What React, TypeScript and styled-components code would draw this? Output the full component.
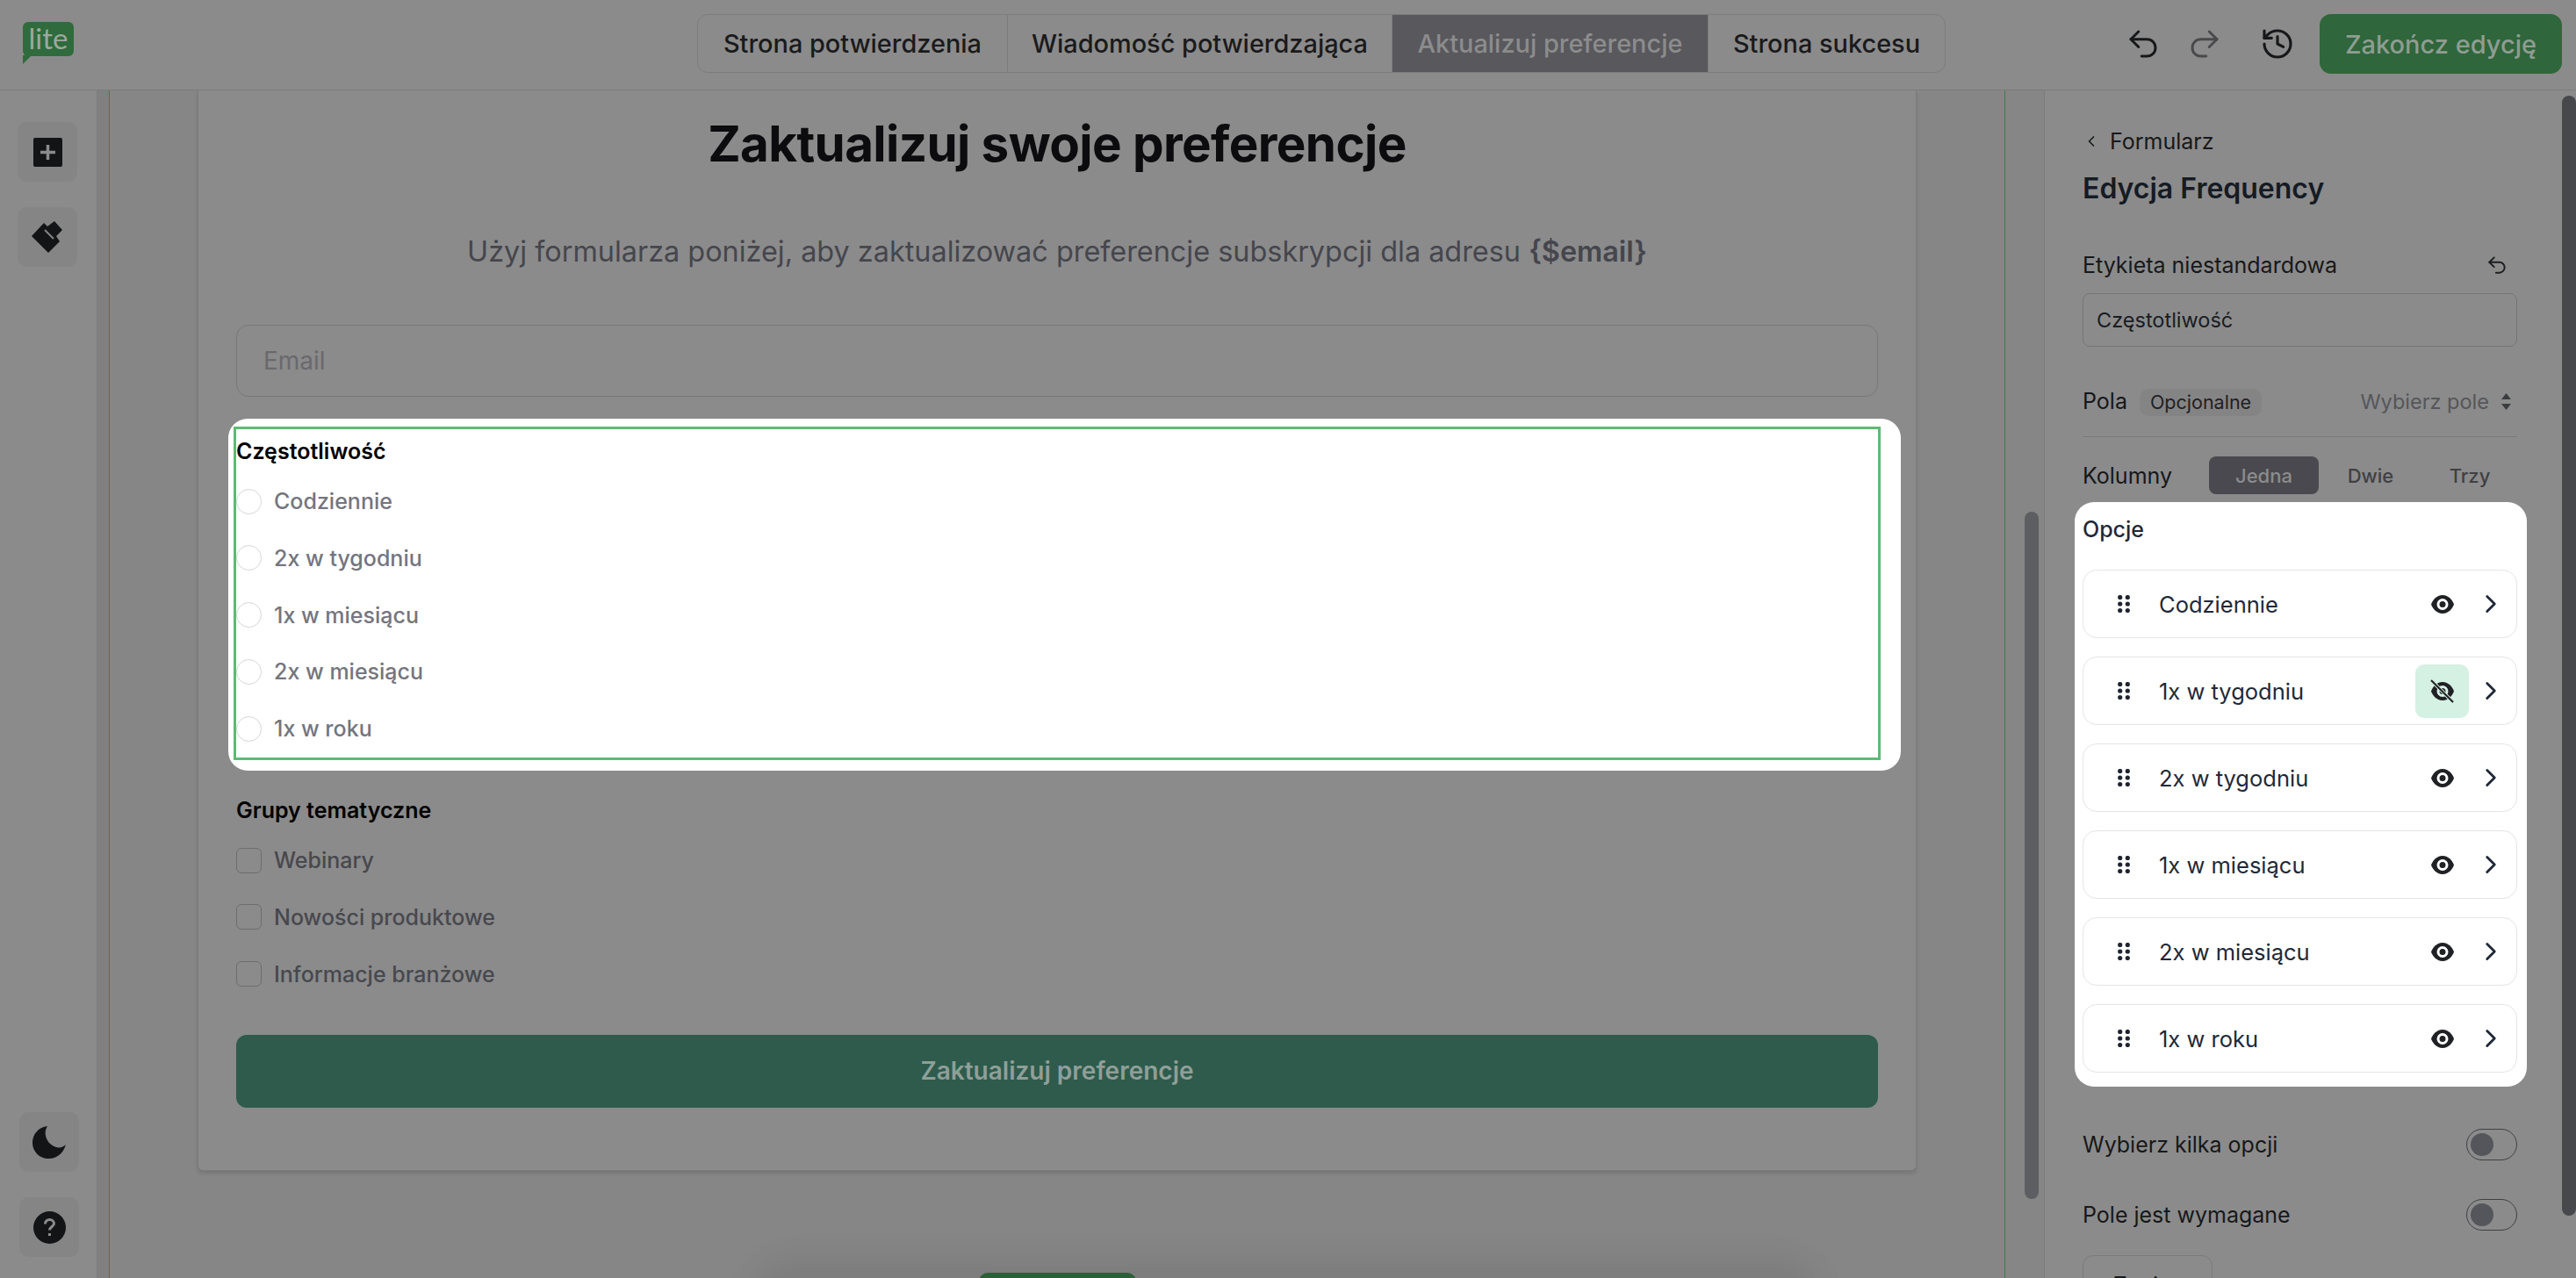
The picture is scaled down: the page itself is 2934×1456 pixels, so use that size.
import React from "react";
import styled, { createGlobalStyle } from "styled-components";
import { ChevronLeft, ChevronRight, History, Redo2, Undo2 } from "lucide-react";

const GlobalStyle = createGlobalStyle`
  * {
    box-sizing: border-box;
  }
  html,
  body {
    margin: 0;
    padding: 0;
    height: 100%;
    overflow: hidden;
    background: #8b8b8b;
    font-family: Inter, "Noto Sans", sans-serif;
  }
`;

const Page = styled.div`
  width: 2934px;
  height: 1456px;
  display: flex;
  flex-direction: column;
  overflow: hidden;
  background: #8b8b8b;
  color: #16171a;
`;

const Header = styled.header`
  height: 103px;
  flex: none;
  display: flex;
  align-items: flex-start;
  border-bottom: 1px solid #7b7b7b;
  padding: 16px 16px 0 26px;
`;

const Logo = styled.div`
  position: relative;
  width: 58px;
  height: 39px;
  margin-top: 9px;
  border-radius: 6px;
  background: #2f6b3c;
  color: #9ea8a0;
  font-family: Lato, sans-serif;
  font-size: 33px;
  line-height: 37px;
  text-align: center;

  &::after {
    content: "";
    position: absolute;
    left: 0;
    top: 38px;
    border-top: 10px solid #2f6b3c;
    border-right: 10px solid transparent;
  }
`;

const Tabs = styled.nav`
  display: flex;
  height: 67px;
  margin-left: 710px;
  border: 1px solid #7c7c7c;
  border-radius: 12px;
  overflow: hidden;
`;

const Tab = styled.div<{ $active?: boolean; $width: number }>`
  display: flex;
  align-items: center;
  justify-content: center;
  width: ${(p) => p.$width}px;
  font-size: 28.9px;
  font-weight: 500;
  background: ${(p) => (p.$active ? "#58585d" : "transparent")};
  color: ${(p) => (p.$active ? "#8c8c8c" : "#1a1a1c")};
  & + & {
    border-left: 1px solid #7c7c7c;
  }
`;

const HeaderActions = styled.div`
  display: flex;
  align-items: center;
  height: 68px;
  margin-left: auto;
`;

const ToolIcon = styled.span<{ $muted?: boolean; $gap: number }>`
  display: flex;
  align-items: center;
  justify-content: center;
  width: 42px;
  margin-right: ${(p) => p.$gap}px;
  color: ${(p) => (p.$muted ? "#4a4a4d" : "#17181a")};
`;

const FinishButton = styled.button`
  width: 276px;
  height: 68px;
  border: none;
  border-radius: 13px;
  background: #2f663b;
  color: #8e9d92;
  font-family: inherit;
  font-size: 29px;
  font-weight: 500;
`;

const Body = styled.div`
  flex: 1;
  min-height: 0;
  display: flex;
`;

const Rail = styled.aside`
  width: 111px;
  flex: none;
  display: flex;
  flex-direction: column;
  padding: 36px 0 24px 20px;
  border-right: 1px solid #7c7c7c;
`;

const RailButton = styled.div<{ $bottom?: boolean }>`
  width: 68px;
  height: 68px;
  display: flex;
  align-items: center;
  justify-content: center;
  border-radius: 11px;
  background: #858585;
  margin-left: ${(p) => (p.$bottom ? "2px" : "0")};
`;

const RailGroup = styled.div`
  display: flex;
  flex-direction: column;
  gap: 29px;
`;

const RailSpacer = styled.div`
  flex: 1;
`;

const LeftGutter = styled.div`
  width: 13px;
  flex: none;
  background: #808080;
`;

const Canvas = styled.main`
  position: relative;
  flex: 1;
  min-width: 0;
  padding: 0 100px;
  overflow: hidden;
  background: #868686;
  border-left: 1px solid #3f7a4e;
  border-right: 1px solid #3f7a4e;
`;

const Card = styled.section`
  padding: 25px 43px 71px;
  background: #8b8b8b;
  border: 1px solid #7a7a7a;
  border-top: none;
  border-radius: 0 0 6px 6px;
  box-shadow: 0 3px 4px rgba(0, 0, 0, 0.12);
`;

const Heading = styled.h1`
  margin: 0;
  font-size: 56.5px;
  font-weight: 700;
  line-height: 72px;
  text-align: center;
  color: #0c0c0e;
  letter-spacing: -0.6px;
`;

const Subtitle = styled.p`
  margin: 65px 0 0;
  font-size: 32.4px;
  line-height: 44px;
  text-align: center;
  color: #45464d;

  b {
    font-weight: 600;
  }
`;

const EmailField = styled.div`
  height: 82px;
  margin-top: 61px;
  padding-left: 30px;
  display: flex;
  align-items: center;
  border: 1px solid #787878;
  border-radius: 14px;
  color: #69696e;
  font-size: 28px;
`;

const Spotlight = styled.div`
  height: 401px;
  margin: 25px -26px 0 -9px;
  padding: 9px 23px 12px 6px;
  background: #ffffff;
  border-radius: 22px;
`;

const Selected = styled.div`
  height: 380px;
  padding: 8px 0 0 0;
  border: 3px solid #5dbb73;
`;

const GroupLabel = styled.div`
  font-size: 25px;
  font-weight: 600;
  line-height: 34px;
  color: #000000;
`;

const ChoiceList = styled.div`
  display: flex;
  flex-direction: column;
  gap: 24.8px;
  margin-top: 20px;
`;

const Choice = styled.div<{ $dim?: boolean }>`
  height: 40px;
  display: flex;
  align-items: center;
  gap: 14px;
  font-size: 25px;
  font-weight: 500;
  color: ${(p) => (p.$dim ? "#47484e" : "#74757e")};
`;

const Radio = styled.span`
  width: 29px;
  height: 29px;
  flex: none;
  border: 1px solid #d6d6d9;
  border-radius: 50%;
`;

const Checkbox = styled.span`
  width: 29px;
  height: 29px;
  flex: none;
  border: 1px solid #6d6d6d;
  border-radius: 6px;
`;

const Groups = styled.div`
  margin-top: 28px;
`;

const SubmitButton = styled.div`
  height: 83px;
  margin-top: 49px;
  display: flex;
  align-items: center;
  justify-content: center;
  border-radius: 12px;
  background: #2e5b4c;
  color: #8f9f98;
  font-size: 28px;
  font-weight: 600;
`;

const Dock = styled.div`
  position: absolute;
  left: 745px;
  top: 1347px;
  width: 1190px;
  height: 60px;
  padding-left: 245px;
  background: #7e7e7e;
  border-radius: 30px;
  box-shadow: 0 -4px 40px 8px rgba(0, 0, 0, 0.09);
`;

const DockTab = styled.div`
  width: 179px;
  height: 40px;
  border-radius: 10px 10px 0 0;
  background: #2b6038;
`;

const RightGutter = styled.div`
  position: relative;
  width: 44px;
  flex: none;
  background: #868686;
`;

const CanvasScroll = styled.div`
  position: absolute;
  left: 22px;
  top: 480px;
  width: 16px;
  height: 783px;
  border-radius: 8px;
  background: #5d5e61;
`;

const Panel = styled.aside`
  position: relative;
  width: 606px;
  flex: none;
  padding: 38px 67px 0 43px;
  overflow: hidden;
  border-left: 1px solid #7c7c7c;
`;

const PanelScroll = styled.div`
  position: absolute;
  right: 0;
  top: 6px;
  width: 16px;
  height: 1276px;
  border-radius: 8px;
  background: #46484b;
`;

const BackLink = styled.div`
  height: 40px;
  display: flex;
  align-items: center;
  gap: 11px;
  font-size: 25px;
  color: #17181a;
`;

const PanelTitle = styled.h2`
  margin: 12px 0 0;
  font-size: 32px;
  font-weight: 600;
  line-height: 44px;
  color: #161b24;
`;

const FieldHeader = styled.div`
  height: 40px;
  margin-top: 45px;
  display: flex;
  align-items: center;
  justify-content: space-between;
  padding-right: 10px;
  font-size: 25px;
  color: #17181a;
`;

const TextField = styled.div`
  height: 61px;
  margin-top: 12px;
  padding-left: 15px;
  display: flex;
  align-items: center;
  border: 1px solid #757575;
  border-radius: 8px;
  font-size: 23.5px;
  color: #1a1c22;
`;

const PolaRow = styled.div`
  margin-top: 48px;
  padding-bottom: 23px;
  display: flex;
  align-items: flex-start;
  border-bottom: 1px solid #7a7a7a;
  font-size: 25px;
  line-height: 29px;
`;

const Pill = styled.span`
  height: 31px;
  margin-left: 14px;
  padding: 0 12px;
  display: flex;
  align-items: center;
  border-radius: 10px;
  background: #848484;
  font-size: 21.5px;
  color: #1f2024;
`;

const FieldSelect = styled.div`
  margin-left: auto;
  display: flex;
  align-items: center;
  gap: 14px;
  padding-right: 7px;
  font-size: 23.5px;
  color: #55565a;
`;

const ColumnsRow = styled.div`
  height: 43px;
  margin-top: 22px;
  display: flex;
  align-items: center;
  font-size: 25px;
`;

const ColumnsLabel = styled.span`
  width: 144px;
`;

const ColumnOption = styled.div<{ $active?: boolean; $width: number }>`
  width: ${(p) => p.$width}px;
  height: 43px;
  display: flex;
  align-items: center;
  justify-content: center;
  border-radius: 8px;
  font-size: 22px;
  font-weight: 500;
  background: ${(p) => (p.$active ? "#49494f" : "transparent")};
  color: ${(p) => (p.$active ? "#8c8c8c" : "#3f4044")};
`;

const OptionsBox = styled.div`
  margin: 9px -11px 0 -9px;
  padding: 11px 11px 16px 9px;
  background: #ffffff;
  border-radius: 22px;
`;

const OptionsTitle = styled.div`
  height: 40px;
  display: flex;
  align-items: center;
  font-size: 25px;
  font-weight: 500;
  color: #1f2937;
`;

const OptionList = styled.div`
  margin-top: 26px;
  display: flex;
  flex-direction: column;
  gap: 21px;
`;

const OptionRow = styled.div`
  height: 78px;
  display: flex;
  align-items: center;
  padding: 0 12px 0 39px;
  border: 1px solid #e5e5e8;
  border-radius: 16px;
  font-size: 25.5px;
  color: #1f2937;
`;

const OptionName = styled.span`
  flex: 1;
  margin-left: 33px;
`;

const EyeButton = styled.span<{ $active?: boolean }>`
  width: 61px;
  height: 61px;
  margin-right: 8px;
  display: flex;
  align-items: center;
  justify-content: center;
  border-radius: 10px;
  background: ${(p) => (p.$active ? "#d4f1e3" : "transparent")};
`;

const ToggleRow = styled.div<{ $gap: number }>`
  height: 36px;
  margin-top: ${(p) => p.$gap}px;
  display: flex;
  align-items: center;
  justify-content: space-between;
  font-size: 25px;
  line-height: 38px;
  color: #17181a;
`;

const Toggle = styled.span`
  width: 58px;
  height: 36px;
  padding: 4px;
  border: 1px solid #3f4044;
  border-radius: 18px;

  &::before {
    content: "";
    display: block;
    width: 26px;
    height: 26px;
    border-radius: 50%;
    background: #55565b;
  }
`;

const GhostButton = styled.div`
  width: 148px;
  height: 70px;
  margin-top: 28px;
  padding-top: 18px;
  border: 1px solid #7a7a7a;
  border-radius: 12px;
  font-size: 25px;
  text-align: center;
  color: #17181a;
`;

const PlusIcon = () => (
  <svg width="33" height="33" viewBox="0 0 33 33">
    <rect width="33" height="33" rx="2" fill="#131416" />
    <path d="M16.5 8v17M8 16.5h17" stroke="#8b8b8b" strokeWidth="3.5" />
  </svg>
);

const BrushIcon = () => (
  <svg width="36" height="36" viewBox="0 0 36 36">
    <path d="M0 17 14 2l4 4 8-6 9 10-7 7 4 6-13 13Z" fill="#131416" />
    <path d="M15 10 25 20" stroke="#858585" strokeWidth="2" />
  </svg>
);

const MoonIcon = () => (
  <svg width="38" height="37" viewBox="0 0 38 37">
    <path
      d="M17 0C7 1 0 9 0 19c0 10 8 18 18 18 10 0 17-6 20-16-3 3-7 4-11 3C20 22 16 16 15 11c-1-4 0-8 2-11Z"
      fill="#131416"
    />
  </svg>
);

const HelpIcon = () => (
  <svg width="37" height="37" viewBox="0 0 37 37">
    <circle cx="18.5" cy="18.5" r="18.5" fill="#131416" />
    <path
      d="M13.5 14.5c0-3 2.200-5 5-5s5 2 5 4.500c0 3.500-5 3.500-5 7.500"
      fill="none"
      stroke="#8b8b8b"
      strokeWidth="3"
    />
    <rect x="17" y="25" width="3" height="3" fill="#8b8b8b" />
  </svg>
);

const SortIcon = () => (
  <svg width="11" height="19" viewBox="0 0 11 19">
    <path d="M5.500 0 11 7H0ZM5.500 19 0 12h11Z" fill="#3b3c40" />
  </svg>
);

const GripIcon = () => (
  <svg width="14" height="20" viewBox="0 0 14 20">
    {[2.5, 10, 17.5].map((cy) => (
      <g key={cy} fill="#1f2430">
        <circle cx="2.7" cy={cy} r="2.6" />
        <circle cx="11.300" cy={cy} r="2.6" />
      </g>
    ))}
  </svg>
);

const EYE =
  "M13 0C20 0 24.500 6 26 10.500 24.500 15 20 21 13 21 6 21 1.500 15 0 10.500 1.500 6 6 0 13 0Z";

const EyeIcon = () => (
  <svg width="26" height="21" viewBox="0 0 26 21">
    <path d={EYE} fill="#202124" />
    <circle cx="13" cy="10.500" r="5" fill="none" stroke="#ffffff" strokeWidth="3" />
  </svg>
);

const EyeOffIcon = () => (
  <svg width="28" height="27" viewBox="-1 -3 28 27">
    <path d={EYE} fill="#202124" />
    <circle cx="13" cy="10.500" r="5" fill="none" stroke="#d4f1e3" strokeWidth="3" />
    <path d="M0-2 25 23" stroke="#d4f1e3" strokeWidth="4" />
    <path d="M0-2 25 23" stroke="#202124" strokeWidth="2.200" />
  </svg>
);

const options = [
  { name: "Codziennie" },
  { name: "1x w tygodniu", hidden: true },
  { name: "2x w tygodniu" },
  { name: "1x w miesiącu" },
  { name: "2x w miesiącu" },
  { name: "1x w roku" },
];

const frequencies = ["Codziennie", "2x w tygodniu", "1x w miesiącu", "2x w miesiącu", "1x w roku"];
const topics = ["Webinary", "Nowości produktowe", "Informacje branżowe"];

const App = () => {
  return (
    <Page>
      <GlobalStyle />
      <Header>
        <Logo>lite</Logo>
        <Tabs>
          <Tab $width={352}>Strona potwierdzenia</Tab>
          <Tab $width={438}>Wiadomość potwierdzająca</Tab>
          <Tab $width={360} $active>
            Aktualizuj preferencje
          </Tab>
          <Tab $width={270}>Strona sukcesu</Tab>
        </Tabs>
        <HeaderActions>
          <ToolIcon $gap={28}>
            <Undo2 size={42} strokeWidth={1.7} />
          </ToolIcon>
          <ToolIcon $gap={41} $muted>
            <Redo2 size={42} strokeWidth={1.7} />
          </ToolIcon>
          <ToolIcon $gap={27}>
            <History size={40} strokeWidth={1.9} />
          </ToolIcon>
          <FinishButton>Zakończ edycję</FinishButton>
        </HeaderActions>
      </Header>
      <Body>
        <Rail>
          <RailGroup>
            <RailButton>
              <PlusIcon />
            </RailButton>
            <RailButton>
              <BrushIcon />
            </RailButton>
          </RailGroup>
          <RailSpacer />
          <RailGroup>
            <RailButton $bottom>
              <MoonIcon />
            </RailButton>
            <RailButton $bottom>
              <HelpIcon />
            </RailButton>
          </RailGroup>
        </Rail>
        <LeftGutter />
        <Canvas>
          <Card>
            <Heading>Zaktualizuj swoje preferencje</Heading>
            <Subtitle>
              Użyj formularza poniżej, aby zaktualizować preferencje subskrypcji dla adresu{" "}
              <b>{"{$email}"}</b>
            </Subtitle>
            <EmailField>Email</EmailField>
            <Spotlight>
              <Selected>
                <GroupLabel>Częstotliwość</GroupLabel>
                <ChoiceList>
                  {frequencies.map((item) => (
                    <Choice key={item}>
                      <Radio />
                      {item}
                    </Choice>
                  ))}
                </ChoiceList>
              </Selected>
            </Spotlight>
            <Groups>
              <GroupLabel>Grupy tematyczne</GroupLabel>
              <ChoiceList>
                {topics.map((item) => (
                  <Choice key={item} $dim>
                    <Checkbox />
                    {item}
                  </Choice>
                ))}
              </ChoiceList>
            </Groups>
            <SubmitButton>Zaktualizuj preferencje</SubmitButton>
          </Card>
          <Dock>
            <DockTab />
          </Dock>
        </Canvas>
        <RightGutter>
          <CanvasScroll />
        </RightGutter>
        <Panel>
          <PanelScroll />
          <BackLink>
            <ChevronLeft size={20} strokeWidth={2} />
            Formularz
          </BackLink>
          <PanelTitle>Edycja Frequency</PanelTitle>
          <FieldHeader>
            Etykieta niestandardowa
            <Undo2 size={26} strokeWidth={1.8} color="#1d1e22" />
          </FieldHeader>
          <TextField>Częstotliwość</TextField>
          <PolaRow>
            Pola
            <Pill>Opcjonalne</Pill>
            <FieldSelect>
              Wybierz pole
              <SortIcon />
            </FieldSelect>
          </PolaRow>
          <ColumnsRow>
            <ColumnsLabel>Kolumny</ColumnsLabel>
            <ColumnOption $width={125} $active>
              Jedna
            </ColumnOption>
            <ColumnOption $width={118}>Dwie</ColumnOption>
            <ColumnOption $width={108}>Trzy</ColumnOption>
          </ColumnsRow>
          <OptionsBox>
            <OptionsTitle>Opcje</OptionsTitle>
            <OptionList>
              {options.map((option) => (
                <OptionRow key={option.name}>
                  <GripIcon />
                  <OptionName>{option.name}</OptionName>
                  <EyeButton $active={option.hidden}>
                    {option.hidden ? <EyeOffIcon /> : <EyeIcon />}
                  </EyeButton>
                  <ChevronRight size={34} strokeWidth={2} color="#1f2937" />
                </OptionRow>
              ))}
            </OptionList>
          </OptionsBox>
          <ToggleRow $gap={48}>
            Wybierz kilka opcji
            <Toggle />
          </ToggleRow>
          <ToggleRow $gap={44}>
            Pole jest wymagane
            <Toggle />
          </ToggleRow>
          <GhostButton>Zapisz</GhostButton>
        </Panel>
      </Body>
    </Page>
  );
};

export default App;
